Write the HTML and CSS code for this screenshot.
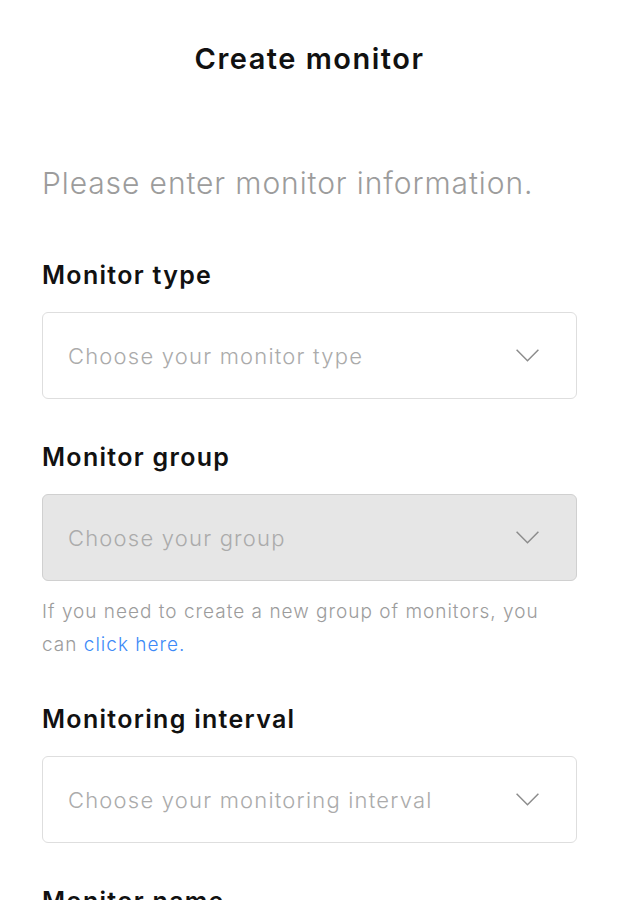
FILE: index.html
```html
<!DOCTYPE html>
<html lang="en">
<head>
<meta charset="utf-8">
<title>Create monitor</title>
<link rel="stylesheet" href="styles.css">
</head>
<body>
<div class="page">
  <h1 class="title">Create monitor</h1>
  <p class="intro">Please enter monitor information.</p>

  <div class="field">
    <label class="label">Monitor type</label>
    <div class="select">
      <span class="placeholder">Choose your monitor type</span>
      <svg class="chev" width="23" height="13" viewBox="0 0 23 13"><path d="M0.6 0.8 L11.5 11.8 L22.4 0.8" fill="none" stroke="#8c8c8c" stroke-width="1.5"/></svg>
    </div>
  </div>

  <div class="field">
    <label class="label">Monitor group</label>
    <div class="select disabled">
      <span class="placeholder">Choose your group</span>
      <svg class="chev" width="23" height="13" viewBox="0 0 23 13"><path d="M0.6 0.8 L11.5 11.8 L22.4 0.8" fill="none" stroke="#8c8c8c" stroke-width="1.5"/></svg>
    </div>
    <p class="help">If you need to create a new group of monitors, you can <a href="#" class="link">click here.</a></p>
  </div>

  <div class="field">
    <label class="label">Monitoring interval</label>
    <div class="select">
      <span class="placeholder">Choose your monitoring interval</span>
      <svg class="chev" width="23" height="13" viewBox="0 0 23 13"><path d="M0.6 0.8 L11.5 11.8 L22.4 0.8" fill="none" stroke="#8c8c8c" stroke-width="1.5"/></svg>
    </div>
  </div>

  <div class="field">
    <label class="label">Monitor name</label>
  </div>
</div>
</body>
</html>
```

FILE: styles.css
```css
html, body {
  margin: 0;
  padding: 0;
  background: #ffffff;
}
body {
  font-family: Inter, "Noto Sans", sans-serif;
  color: #111;
}
.page {
  padding: 0 42px;
}
.title {
  margin: 0;
  padding-top: 39px;
  text-align: center;
  font-size: 29px;
  line-height: 40px;
  font-weight: 600;
  letter-spacing: 1.5px;
  color: #111;
}
.intro {
  margin: 84px 0 0 0;
  font-size: 30px;
  line-height: 40px;
  font-weight: 300;
  letter-spacing: 0.9px;
  color: #9c9c9c;
}
.field {
  margin-top: 55px;
}
.field + .field {
  margin-top: 41px;
}
.label {
  display: block;
  font-size: 25px;
  line-height: 34px;
  font-weight: 600;
  letter-spacing: 1.3px;
  color: #111;
}
.select {
  margin-top: 20px;
  height: 87px;
  box-sizing: border-box;
  border: 1px solid #dedede;
  border-radius: 6px;
  display: flex;
  align-items: center;
  justify-content: space-between;
  padding: 0 37px 0 25px;
  background: #fff;
}
.select.disabled {
  background: #e6e6e6;
  border-color: #d0d0d0;
}
.placeholder {
  font-size: 22px;
  font-weight: 300;
  letter-spacing: 1.2px;
  color: #ababab;
}
.chev {
  display: block;
}
.help {
  margin: 14px 0 0 0;
  font-size: 19px;
  line-height: 33px;
  font-weight: 300;
  letter-spacing: 1px;
  color: #9c9c9c;
  padding-right: 20px;
}
.link {
  color: #3d8af7;
  text-decoration: none;
}
```
